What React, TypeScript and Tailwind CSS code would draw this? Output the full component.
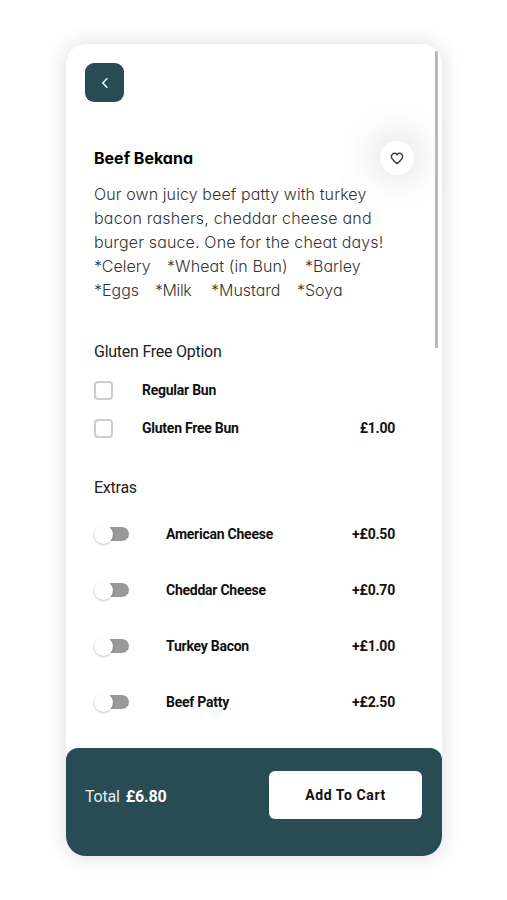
import { useState } from 'react';

interface Option {
  name: string;
  price?: string;
}

const description = [
  { text: 'Our own juicy beef patty with turkey', className: 'tracking-[0.1px]' },
  { text: 'bacon rashers, cheddar cheese and', className: 'tracking-[0.2px]' },
  { text: 'burger sauce. One for the cheat days!', className: 'tracking-[0.150px]' },
];

const allergens = [
  [
    { name: '*Celery', className: 'w-[73px]' },
    { name: '*Wheat (in Bun)', className: 'w-[138px] tracking-[0.1px]' },
    { name: '*Barley', className: 'w-[60px]' },
  ],
  [
    { name: '*Eggs', className: 'w-[61px]' },
    { name: '*Milk', className: 'w-[56px] tracking-[-0.4px]' },
    { name: '*Mustard', className: 'w-[86px]' },
    { name: '*Soya', className: 'w-[50px]' },
  ],
];

const bunOptions: Option[] = [{ name: 'Regular Bun' }, { name: 'Gluten Free Bun', price: '£1.00' }];

const extras: Option[] = [
  { name: 'American Cheese', price: '+£0.50' },
  { name: 'Cheddar Cheese', price: '+£0.70' },
  { name: 'Turkey Bacon', price: '+£1.00' },
  { name: 'Beef Patty', price: '+£2.50' },
];

function Checkbox({ label }: { label: string }) {
  const [checked, setChecked] = useState(false);

  return (
    <button
      role="checkbox"
      aria-checked={checked}
      aria-label={label}
      onClick={() => setChecked(!checked)}
      className={`h-[19px] w-[19px] shrink-0 rounded-[4px] border-2 border-[#cecece] ${checked ? 'bg-[#294b53]' : 'bg-white'}`}
    />
  );
}

function Toggle({ label }: { label: string }) {
  const [on, setOn] = useState(false);

  return (
    <button
      role="switch"
      aria-checked={on}
      aria-label={label}
      onClick={() => setOn(!on)}
      className="flex h-5 w-[35px] shrink-0 items-center"
    >
      <span className={`flex h-[14px] w-full items-center rounded-full bg-[#999999] ${on ? 'justify-end' : 'justify-start'}`}>
        <span className="h-[19px] w-[19px] rounded-full bg-white shadow-[0_1px_2px_rgba(0,0,0,0.25)]" />
      </span>
    </button>
  );
}

export default function App() {
  const [liked, setLiked] = useState(false);

  return (
    <div className="h-[900px] w-[507px] overflow-hidden bg-white pl-[66px] pt-[44px] font-['Roboto',sans-serif] text-black">
      <div className="relative flex h-[812px] w-[376px] flex-col overflow-hidden rounded-[20px] bg-white shadow-[0_0_20px_rgba(0,0,0,0.15)]">
        <div className="h-[704px] shrink-0 pl-[28px] pr-[47px]">
          <button
            aria-label="Back"
            className="-ml-[9px] mt-[19px] flex h-[39px] w-[39px] items-center justify-center rounded-[9px] bg-[#294b53]"
          >
            <svg width="8" height="12" viewBox="0 0 8 12" fill="none" stroke="#e9f5f8" strokeWidth="1.6">
              <path d="M6.3 1.2 1.8 6l4.5 4.8" />
            </svg>
          </button>

          <div className="-mr-[19px] mt-[39px] flex h-[34px] items-center justify-between">
            <h1 className="whitespace-nowrap font-['Inter',sans-serif] text-[16px] font-bold tracking-[0px] [font-feature-settings:'cv11']">
              Beef Bekana
            </h1>
            <button
              aria-label="Favourite"
              onClick={() => setLiked(!liked)}
              className="flex h-[34px] w-[34px] items-center justify-center rounded-full bg-white shadow-[0_-2px_36px_8px_rgba(0,0,0,0.11)]"
            >
              <svg width="14" height="13" viewBox="0 0 14 13" fill={liked ? '#333' : 'none'} stroke="#333" strokeWidth="1.3">
                <path d="M7 2.7C6 1 3.900.8 2.600 1.900 1.200 3.200 1.200 5.100 2.100 6.700 3.200 8.500 5 10.200 7 11.600c2-1.400 3.800-3.100 4.900-4.900.9-1.600.9-3.500-.5-4.800C10.100.8 8 1 7 2.700Z" />
              </svg>
            </button>
          </div>

          <div className="mt-[7px] whitespace-nowrap font-['Inter',sans-serif] text-[16px] font-light leading-6 text-[#333] [font-feature-settings:'cv11']">
            {description.map((line) => (
              <p key={line.text} className={line.className}>
                {line.text}
              </p>
            ))}
            {allergens.map((row, index) => (
              <p key={index} className="flex">
                {row.map((item) => (
                  <span key={item.name} className={item.className}>
                    {item.name}
                  </span>
                ))}
              </p>
            ))}
          </div>

          <h2 className="mt-[38px] text-[16px] leading-6 tracking-[-0.250px] text-[#222]">Gluten Free Option</h2>
          <ul className="mt-[7px]">
            {bunOptions.map((option) => (
              <li key={option.name} className="flex h-[38px] items-center text-[14px] font-bold tracking-[-0.250px] text-[#111]">
                <Checkbox label={option.name} />
                <span className="ml-[29px] grow">{option.name}</span>
                <span>{option.price}</span>
              </li>
            ))}
          </ul>

          <h2 className="mt-[29px] text-[16px] leading-6 tracking-[-0.250px] text-[#222]">Extras</h2>
          <ul className="mt-[6px]">
            {extras.map((extra) => (
              <li key={extra.name} className="flex h-14 items-center text-[14px] font-bold tracking-[-0.250px] text-[#111]">
                <Toggle label={extra.name} />
                <span className="ml-[37px] grow">{extra.name}</span>
                <span className="tracking-[-0.2px]">{extra.price}</span>
              </li>
            ))}
          </ul>
        </div>

        <div className="flex grow items-start justify-between rounded-t-[12px] bg-[#294b53] pl-[19px] pr-[20px] pt-[23px]">
          <p className="flex h-[52px] items-center gap-[6px] text-[16px] tracking-[-0.2px] text-[#e4edf0]">
            Total <span className="font-bold text-white">£6.80</span>
          </p>
          <button className="h-[48px] w-[153px] rounded-[6px] bg-white text-[14px] font-bold tracking-[0.6px] text-[#111]">
            Add To Cart
          </button>
        </div>

        {/* scrollbar thumb */}
        <div className="absolute right-[4px] top-[7px] h-[297px] w-[3px] bg-[#bababa]" />
      </div>
    </div>
  );
}
